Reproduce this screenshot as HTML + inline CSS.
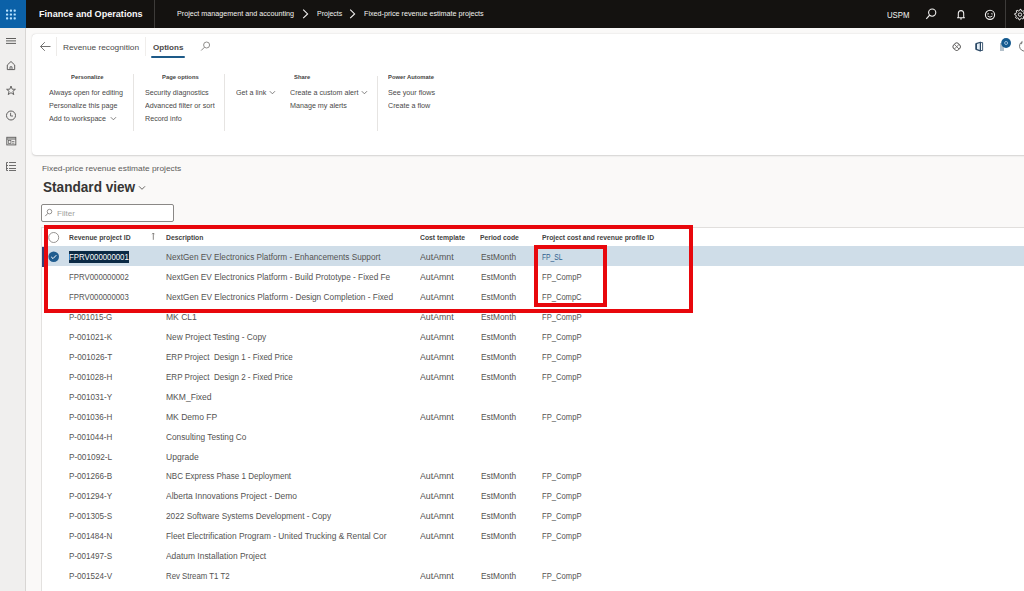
<!DOCTYPE html>
<html><head><meta charset="utf-8">
<style>
*{margin:0;padding:0;box-sizing:border-box}
html,body{width:1024px;height:591px;overflow:hidden;background:#faf9f8;font-family:"Liberation Sans",sans-serif;position:relative}
.a{position:absolute;white-space:pre;line-height:normal;transform-origin:0 0}
svg.a{overflow:visible}
</style></head><body>
<div class="a" style="left:0px;top:0px;width:1024px;height:28px;background:#141210;"></div>
<div class="a" style="left:0px;top:0px;width:26px;height:28px;background:#0b61a8;"></div>
<svg class="a" style="left:0px;top:0px" width="26" height="28" viewBox="0 0 26 28"><rect x="6.0" y="9.6" width="2.2" height="2.2" rx="0.7" fill="#b8e2ff"/><rect x="6.0" y="13.4" width="2.2" height="2.2" rx="0.7" fill="#b8e2ff"/><rect x="6.0" y="17.2" width="2.2" height="2.2" rx="0.7" fill="#b8e2ff"/><rect x="9.8" y="9.6" width="2.2" height="2.2" rx="0.7" fill="#b8e2ff"/><rect x="9.8" y="13.4" width="2.2" height="2.2" rx="0.7" fill="#b8e2ff"/><rect x="9.8" y="17.2" width="2.2" height="2.2" rx="0.7" fill="#b8e2ff"/><rect x="13.6" y="9.6" width="2.2" height="2.2" rx="0.7" fill="#b8e2ff"/><rect x="13.6" y="13.4" width="2.2" height="2.2" rx="0.7" fill="#b8e2ff"/><rect x="13.6" y="17.2" width="2.2" height="2.2" rx="0.7" fill="#b8e2ff"/></svg>
<div class="a" style="left:38.90px;top:8.31px;font-size:9.6px;font-weight:bold;color:#f8f8f8;transform:scaleX(0.9479);">Finance and Operations</div>
<div class="a" style="left:154px;top:0px;width:1px;height:28px;background:#3d3b39;"></div>
<div class="a" style="left:177.30px;top:9.45px;font-size:7.9px;font-weight:normal;color:#f3f2f1;transform:scaleX(0.9103);">Project management and accounting</div>
<svg class="a" style="left:302.3px;top:9px" width="7" height="10" viewBox="0 0 7 10"><path d="M1.2 0.7 L5.6 4.95 L1.2 9.2" stroke="#f3f2f1" stroke-width="1.1" fill="none"/></svg>
<div class="a" style="left:316.70px;top:9.45px;font-size:7.9px;font-weight:normal;color:#f3f2f1;transform:scaleX(0.8872);">Projects</div>
<svg class="a" style="left:349.3px;top:9px" width="7" height="10" viewBox="0 0 7 10"><path d="M1.2 0.7 L5.6 4.95 L1.2 9.2" stroke="#f3f2f1" stroke-width="1.1" fill="none"/></svg>
<div class="a" style="left:363.50px;top:9.45px;font-size:7.9px;font-weight:normal;color:#f3f2f1;transform:scaleX(0.9097);">Fixed-price revenue estimate projects</div>
<div class="a" style="left:886.50px;top:9.92px;font-size:8.6px;font-weight:normal;color:#f3f2f1;transform:scaleX(0.9057);">USPM</div>
<svg class="a" style="left:924px;top:8px" width="14" height="12" viewBox="0 0 14 12"><circle cx="8.2" cy="4.6" r="3.6" stroke="#f3f2f1" stroke-width="1.1" fill="none"/><path d="M5.6 7.2 L2.3 10.8" stroke="#f3f2f1" stroke-width="1.2"/></svg>
<svg class="a" style="left:955.5px;top:9px" width="10" height="11" viewBox="0 0 10 11"><path d="M2.3 8.2 V4.6 a2.7 3 0 0 1 5.4 0 V8.2 L8.5 8.8 H1.5 Z" stroke="#f3f2f1" stroke-width="1.05" fill="none" stroke-linejoin="round"/><path d="M4 9.9 h2" stroke="#f3f2f1" stroke-width="1"/></svg>
<svg class="a" style="left:984px;top:9px" width="12" height="12" viewBox="0 0 12 12"><circle cx="6" cy="5.8" r="4.6" stroke="#f3f2f1" stroke-width="1.1" fill="none"/><path d="M3.2 5.2 Q4.1 3.9 5 5.2 M7 5.2 Q7.9 3.9 8.8 5.2" stroke="#f3f2f1" stroke-width="0.9" fill="none"/><path d="M3.6 7 Q6 9.4 8.4 7" stroke="#f3f2f1" stroke-width="0.95" fill="none"/></svg>
<div class="a" style="left:1005px;top:0px;width:1px;height:28px;background:#3d3b39;"></div>
<svg class="a" style="left:1013px;top:8px" width="14" height="14" viewBox="0 0 14 14"><path d="M7.00 1.30 L8.03 1.40 L8.49 3.00 L9.17 3.36 L10.75 2.85 L11.41 3.66 L10.60 5.11 L10.83 5.84 L12.30 6.60 L12.20 7.63 L10.60 8.09 L10.24 8.77 L10.75 10.35 L9.94 11.01 L8.49 10.20 L7.76 10.43 L7.00 11.90 L5.97 11.80 L5.51 10.20 L4.83 9.84 L3.25 10.35 L2.59 9.54 L3.40 8.09 L3.17 7.36 L1.70 6.60 L1.80 5.57 L3.40 5.11 L3.76 4.43 L3.25 2.85 L4.06 2.19 L5.51 3.00 L6.24 2.77 Z" stroke="#f3f2f1" stroke-width="0.95" fill="none" stroke-linejoin="round"/><circle cx="7" cy="6.6" r="1.7" stroke="#f3f2f1" stroke-width="0.95" fill="none"/></svg>
<div class="a" style="left:0px;top:28px;width:25px;height:563px;background:#f0efee;"></div>
<div class="a" style="left:25px;top:28px;width:1px;height:563px;background:#d8d6d4;"></div>
<svg class="a" style="left:5px;top:36px" width="12" height="9" viewBox="0 0 12 9"><path d="M1 2.5 H11 M1 4.9 H11 M1 7.4 H11" stroke="#5f5e5d" stroke-width="1"/></svg>
<svg class="a" style="left:6px;top:60px" width="10" height="11" viewBox="0 0 10 11"><path d="M1.3 9.6 V5 L5 1.5 L8.7 5 V9.6 Z" stroke="#5f5e5d" stroke-width="1" fill="none" stroke-linejoin="round"/><path d="M4 9.6 V6.8 H6 V9.6" stroke="#5f5e5d" stroke-width="0.9" fill="none"/></svg>
<svg class="a" style="left:6px;top:85px" width="10" height="11" viewBox="0 0 10 11"><path d="M5 1 L6.2 4.2 L9.4 4.3 L6.9 6.3 L7.8 9.6 L5 7.7 L2.2 9.6 L3.1 6.3 L0.6 4.3 L3.8 4.2 Z" stroke="#5f5e5d" stroke-width="0.95" fill="none" stroke-linejoin="round"/></svg>
<svg class="a" style="left:5px;top:110px" width="12" height="11" viewBox="0 0 12 11"><circle cx="6" cy="5.5" r="4.5" stroke="#5f5e5d" stroke-width="1" fill="none"/><path d="M5.6 2.8 V6 H8" stroke="#5f5e5d" stroke-width="0.9" fill="none"/></svg>
<svg class="a" style="left:6px;top:136px" width="11" height="10" viewBox="0 0 11 10"><rect x="0.8" y="1.3" width="9" height="7.6" stroke="#5f5e5d" stroke-width="0.95" fill="none"/><path d="M0.8 3 H9.8" stroke="#5f5e5d" stroke-width="1"/><rect x="2.3" y="4.4" width="2.6" height="3" stroke="#5f5e5d" stroke-width="0.7" fill="none"/><path d="M5.8 5.5 H8.4 M5.8 7.2 H8.4" stroke="#5f5e5d" stroke-width="0.7"/></svg>
<svg class="a" style="left:5px;top:161px" width="12" height="10" viewBox="0 0 12 10"><path d="M4 1.5 H11 M4 4.5 H11 M4 7.5 H11 M4 9.5 H11" stroke="#5f5e5d" stroke-width="0.9"/><path d="M1.5 1.5 V9.5" stroke="#5f5e5d" stroke-width="0.9"/><path d="M1.5 1.5 H3 M1.5 4.5 H3 M1.5 7.5 H3 M1.5 9.5 H3" stroke="#5f5e5d" stroke-width="0.9"/></svg>
<div class="a" style="left:32px;top:34px;width:1010px;height:121px;background:#fff;border-radius:4px;box-shadow:0 0.6px 1.8px rgba(0,0,0,0.16),0 0 0.5px rgba(0,0,0,0.1)"></div>
<svg class="a" style="left:39px;top:41px" width="13" height="11" viewBox="0 0 13 11"><path d="M11.5 5.5 H1.5 M5.8 1.2 L1.5 5.5 L5.8 9.8" stroke="#6b6a69" stroke-width="0.95" fill="none"/></svg>
<div class="a" style="left:56px;top:37px;width:1px;height:19px;background:#edebe9;"></div>
<div class="a" style="left:63.40px;top:42.67px;font-size:8.1px;font-weight:normal;color:#4b4a49;transform:scaleX(1.0236);">Revenue recognition</div>
<div class="a" style="left:145px;top:37px;width:1px;height:19px;background:#f0eeec;"></div>
<div class="a" style="left:152.70px;top:42.67px;font-size:8.1px;font-weight:bold;color:#4a4948;transform:scaleX(0.9942);">Options</div>
<div class="a" style="left:151px;top:56px;width:34px;height:2px;background:#1d5a88;border-radius:1px"></div>
<svg class="a" style="left:200px;top:41px" width="11" height="11" viewBox="0 0 11 11"><circle cx="6.6" cy="4" r="3" stroke="#8a8886" stroke-width="0.95" fill="none"/><path d="M4.5 6.2 L1.2 9.5" stroke="#8a8886" stroke-width="1"/></svg>
<svg class="a" style="left:950px;top:40px" width="12" height="12" viewBox="0 0 12 12"><rect x="3.4" y="3.4" width="6.6" height="6.6" rx="2.3" transform="rotate(45 6.7 6.7)" stroke="#6b6a69" stroke-width="0.95" fill="none"/><path d="M4.4 4.4 L9 9 M9 4.4 L4.4 9" stroke="#6b6a69" stroke-width="0.9"/></svg>
<svg class="a" style="left:974px;top:41px" width="11" height="11" viewBox="0 0 11 11"><path d="M2.2 2.6 L6.4 1.2 V9.9 L2.2 8.4 Z" stroke="#2d4a66" stroke-width="1.2" fill="#e3edf5" stroke-linejoin="round"/><path d="M6.4 1.6 H8.6 V9.5 H6.4" stroke="#2d4a66" stroke-width="0.9" fill="none"/><path d="M2.2 2.6 V8.4" stroke="#2d4a66" stroke-width="1.6"/></svg>
<div class="a" style="left:1000px;top:43px;width:4px;height:8px;background:#b3c0ca;"></div>
<svg class="a" style="left:1000px;top:37px" width="12" height="12" viewBox="0 0 12 12"><circle cx="6.1" cy="6" r="4.9" fill="#155a8f"/><circle cx="6.1" cy="6" r="1.5" stroke="#bcd6ec" stroke-width="0.8" fill="none"/></svg>
<svg class="a" style="left:1016px;top:39px" width="12" height="14" viewBox="0 0 12 14"><path d="M6.2 2.6 A4.9 4.9 0 1 0 11 11.5" stroke="#6b6a69" stroke-width="0.95" fill="none"/><path d="M6.2 2.6 L5.4 5.2" stroke="#6b6a69" stroke-width="0.9"/></svg>
<div class="a" style="left:71.00px;top:73.84px;font-size:5.7px;font-weight:bold;color:#454443;transform:scaleX(1.0278);">Personalize</div>
<div class="a" style="left:49.20px;top:88.29px;font-size:7.3px;font-weight:normal;color:#4a4948;transform:scaleX(0.9814);">Always open for editing</div>
<div class="a" style="left:49.20px;top:101.34px;font-size:7.3px;font-weight:normal;color:#4a4948;transform:scaleX(0.9814);">Personalize this page</div>
<div class="a" style="left:49.20px;top:114.39px;font-size:7.3px;font-weight:normal;color:#4a4948;transform:scaleX(0.9814);">Add to workspace</div>
<svg class="a" style="left:110.3px;top:115.5px" width="7" height="5" viewBox="0 0 7 5"><path d="M0.8 1.2 L3.4 3.8 L6 1.2" stroke="#6b6a69" stroke-width="0.85" fill="none"/></svg>
<div class="a" style="left:133px;top:74px;width:1px;height:57px;background:#e6e4e2;"></div>
<div class="a" style="left:162.00px;top:73.84px;font-size:5.7px;font-weight:bold;color:#454443;transform:scaleX(1.0278);">Page options</div>
<div class="a" style="left:144.80px;top:88.29px;font-size:7.3px;font-weight:normal;color:#4a4948;transform:scaleX(0.9814);">Security diagnostics</div>
<div class="a" style="left:144.80px;top:101.34px;font-size:7.3px;font-weight:normal;color:#4a4948;transform:scaleX(0.9814);">Advanced filter or sort</div>
<div class="a" style="left:144.80px;top:114.39px;font-size:7.3px;font-weight:normal;color:#4a4948;transform:scaleX(0.9814);">Record info</div>
<div class="a" style="left:224px;top:74px;width:1px;height:57px;background:#e6e4e2;"></div>
<div class="a" style="left:235.90px;top:88.29px;font-size:7.3px;font-weight:normal;color:#4a4948;transform:scaleX(0.9814);">Get a link</div>
<svg class="a" style="left:268.5px;top:90px" width="7" height="5" viewBox="0 0 7 5"><path d="M0.8 1.2 L3.4 3.8 L6 1.2" stroke="#6b6a69" stroke-width="0.85" fill="none"/></svg>
<div class="a" style="left:294.10px;top:73.84px;font-size:5.7px;font-weight:bold;color:#454443;transform:scaleX(1.0278);">Share</div>
<div class="a" style="left:290.00px;top:88.29px;font-size:7.3px;font-weight:normal;color:#4a4948;transform:scaleX(0.9814);">Create a custom alert</div>
<svg class="a" style="left:361px;top:90px" width="7" height="5" viewBox="0 0 7 5"><path d="M0.8 1.2 L3.4 3.8 L6 1.2" stroke="#6b6a69" stroke-width="0.85" fill="none"/></svg>
<div class="a" style="left:290.00px;top:101.34px;font-size:7.3px;font-weight:normal;color:#4a4948;transform:scaleX(0.9814);">Manage my alerts</div>
<div class="a" style="left:377px;top:76px;width:1px;height:55px;background:#e6e4e2;"></div>
<div class="a" style="left:387.70px;top:73.84px;font-size:5.7px;font-weight:bold;color:#454443;transform:scaleX(1.0278);">Power Automate</div>
<div class="a" style="left:387.70px;top:88.29px;font-size:7.3px;font-weight:normal;color:#4a4948;transform:scaleX(0.9814);">See your flows</div>
<div class="a" style="left:387.70px;top:101.34px;font-size:7.3px;font-weight:normal;color:#4a4948;transform:scaleX(0.9814);">Create a flow</div>
<div class="a" style="left:41.80px;top:163.56px;font-size:8.0px;font-weight:normal;color:#5c5b5a;transform:scaleX(1.0436);">Fixed-price revenue estimate projects</div>
<div class="a" style="left:42.80px;top:179.04px;font-size:14.1px;font-weight:bold;color:#363534;transform:scaleX(0.9648);">Standard view</div>
<svg class="a" style="left:138px;top:185px" width="8" height="6" viewBox="0 0 8 6"><path d="M1 1.3 L4 4.3 L7 1.3" stroke="#605e5c" stroke-width="0.95" fill="none"/></svg>
<div class="a" style="left:41px;top:204px;width:133px;height:18px;background:#fff;border:1px solid #8a8886;border-radius:2px"></div>
<svg class="a" style="left:44px;top:208px" width="10" height="10" viewBox="0 0 10 10"><circle cx="5.5" cy="3.6" r="2.3" stroke="#8a8886" stroke-width="0.9" fill="none"/><path d="M3.9 5.3 L1.3 8.1" stroke="#8a8886" stroke-width="1"/></svg>
<div class="a" style="left:56.90px;top:209.26px;font-size:8.0px;font-weight:normal;color:#a19f9d;transform:scaleX(1.0067);">Filter</div>
<div class="a" style="left:41px;top:227px;width:983px;height:364px;background:#ffffff;"></div>
<div class="a" style="left:41px;top:227px;width:983px;height:1px;background:#e1dfdd;"></div>
<div class="a" style="left:41px;top:227px;width:1px;height:364px;background:#e3e1df;"></div>
<svg class="a" style="left:47px;top:231px" width="14" height="14" viewBox="0 0 14 14"><circle cx="6.7" cy="6.5" r="5" stroke="#8a8886" stroke-width="0.9" fill="#fff"/></svg>
<div class="a" style="left:68.80px;top:233.76px;font-size:6.9px;font-weight:bold;color:#434241;transform:scaleX(0.9861);">Revenue project ID</div>
<svg class="a" style="left:150px;top:232px" width="7" height="9" viewBox="0 0 7 9"><path d="M3.3 7.8 V1 M2.2 2.2 L3.3 1 L4.4 2.2" stroke="#7a7876" stroke-width="0.9" fill="none"/></svg>
<div class="a" style="left:166.00px;top:233.76px;font-size:6.9px;font-weight:bold;color:#434241;transform:scaleX(0.9861);">Description</div>
<div class="a" style="left:419.70px;top:233.76px;font-size:6.9px;font-weight:bold;color:#434241;transform:scaleX(0.9861);">Cost template</div>
<div class="a" style="left:480.30px;top:233.76px;font-size:6.9px;font-weight:bold;color:#434241;transform:scaleX(0.9861);">Period code</div>
<div class="a" style="left:541.80px;top:233.76px;font-size:6.9px;font-weight:bold;color:#434241;transform:scaleX(0.9861);">Project cost and revenue profile ID</div>
<div class="a" style="left:42px;top:246px;width:982px;height:20px;background:#cfdde8;"></div>
<div class="a" style="left:41.5px;top:247px;width:2.6px;height:19.5px;background:#33427a;"></div>
<div class="a" style="left:69px;top:251px;width:60px;height:12px;background:#0b2a45;"></div>
<svg class="a" style="left:47px;top:250px" width="14" height="14" viewBox="0 0 14 14"><circle cx="6.7" cy="6.8" r="5.3" fill="#1f5c8f"/><path d="M4.2 6.9 L6 8.6 L9.3 5.2" stroke="#fff" stroke-width="1" fill="none"/></svg>
<div class="a" style="left:69.10px;top:252.41px;font-size:8.5px;font-weight:normal;color:#ffffff;transform:scaleX(0.9191);">FPRV000000001</div>
<div class="a" style="left:166.40px;top:252.41px;font-size:8.5px;font-weight:normal;color:#545352;transform:scaleX(0.9681);">NextGen EV Electronics Platform - Enhancements Support</div>
<div class="a" style="left:419.70px;top:252.41px;font-size:8.5px;font-weight:normal;color:#545352;transform:scaleX(1.0334);">AutAmnt</div>
<div class="a" style="left:480.90px;top:252.41px;font-size:8.5px;font-weight:normal;color:#545352;transform:scaleX(0.9775);">EstMonth</div>
<div class="a" style="left:541.80px;top:252.41px;font-size:8.5px;font-weight:normal;color:#2f5f8d;transform:scaleX(0.7923);">FP_SL</div>
<div class="a" style="left:69.10px;top:272.32px;font-size:8.5px;font-weight:normal;color:#545352;transform:scaleX(0.9191);">FPRV000000002</div>
<div class="a" style="left:166.40px;top:272.32px;font-size:8.5px;font-weight:normal;color:#545352;transform:scaleX(0.9705);">NextGen EV Electronics Platform - Build Prototype - Fixed Fe</div>
<div class="a" style="left:419.70px;top:272.32px;font-size:8.5px;font-weight:normal;color:#545352;transform:scaleX(1.0334);">AutAmnt</div>
<div class="a" style="left:480.90px;top:272.32px;font-size:8.5px;font-weight:normal;color:#545352;transform:scaleX(0.9775);">EstMonth</div>
<div class="a" style="left:541.80px;top:272.32px;font-size:8.5px;font-weight:normal;color:#545352;transform:scaleX(0.9013);">FP_CompP</div>
<div class="a" style="left:69.10px;top:292.23px;font-size:8.5px;font-weight:normal;color:#545352;transform:scaleX(0.9191);">FPRV000000003</div>
<div class="a" style="left:166.40px;top:292.23px;font-size:8.5px;font-weight:normal;color:#545352;transform:scaleX(0.9751);">NextGen EV Electronics Platform - Design Completion - Fixed</div>
<div class="a" style="left:419.70px;top:292.23px;font-size:8.5px;font-weight:normal;color:#545352;transform:scaleX(1.0334);">AutAmnt</div>
<div class="a" style="left:480.90px;top:292.23px;font-size:8.5px;font-weight:normal;color:#545352;transform:scaleX(0.9775);">EstMonth</div>
<div class="a" style="left:541.80px;top:292.23px;font-size:8.5px;font-weight:normal;color:#545352;transform:scaleX(0.8918);">FP_CompC</div>
<div class="a" style="left:69.10px;top:312.14px;font-size:8.5px;font-weight:normal;color:#545352;transform:scaleX(0.9328);">P-001015-G</div>
<div class="a" style="left:166.40px;top:312.14px;font-size:8.5px;font-weight:normal;color:#545352;transform:scaleX(1.0055);">MK CL1</div>
<div class="a" style="left:419.70px;top:312.14px;font-size:8.5px;font-weight:normal;color:#545352;transform:scaleX(1.0334);">AutAmnt</div>
<div class="a" style="left:480.90px;top:312.14px;font-size:8.5px;font-weight:normal;color:#545352;transform:scaleX(0.9775);">EstMonth</div>
<div class="a" style="left:541.80px;top:312.14px;font-size:8.5px;font-weight:normal;color:#545352;transform:scaleX(0.9013);">FP_CompP</div>
<div class="a" style="left:69.10px;top:332.05px;font-size:8.5px;font-weight:normal;color:#545352;transform:scaleX(0.9521);">P-001021-K</div>
<div class="a" style="left:166.40px;top:332.05px;font-size:8.5px;font-weight:normal;color:#545352;transform:scaleX(0.9789);">New Project Testing - Copy</div>
<div class="a" style="left:419.70px;top:332.05px;font-size:8.5px;font-weight:normal;color:#545352;transform:scaleX(1.0334);">AutAmnt</div>
<div class="a" style="left:480.90px;top:332.05px;font-size:8.5px;font-weight:normal;color:#545352;transform:scaleX(0.9775);">EstMonth</div>
<div class="a" style="left:541.80px;top:332.05px;font-size:8.5px;font-weight:normal;color:#545352;transform:scaleX(0.9013);">FP_CompP</div>
<div class="a" style="left:69.10px;top:351.96px;font-size:8.5px;font-weight:normal;color:#545352;transform:scaleX(0.9623);">P-001026-T</div>
<div class="a" style="left:166.40px;top:351.96px;font-size:8.5px;font-weight:normal;color:#545352;transform:scaleX(0.9429);">ERP Project&nbsp; Design 1 - Fixed Price</div>
<div class="a" style="left:419.70px;top:351.96px;font-size:8.5px;font-weight:normal;color:#545352;transform:scaleX(1.0334);">AutAmnt</div>
<div class="a" style="left:480.90px;top:351.96px;font-size:8.5px;font-weight:normal;color:#545352;transform:scaleX(0.9775);">EstMonth</div>
<div class="a" style="left:541.80px;top:351.96px;font-size:8.5px;font-weight:normal;color:#545352;transform:scaleX(0.9013);">FP_CompP</div>
<div class="a" style="left:69.10px;top:371.87px;font-size:8.5px;font-weight:normal;color:#545352;transform:scaleX(0.9423);">P-001028-H</div>
<div class="a" style="left:166.40px;top:371.87px;font-size:8.5px;font-weight:normal;color:#545352;transform:scaleX(0.9429);">ERP Project&nbsp; Design 2 - Fixed Price</div>
<div class="a" style="left:419.70px;top:371.87px;font-size:8.5px;font-weight:normal;color:#545352;transform:scaleX(1.0334);">AutAmnt</div>
<div class="a" style="left:480.90px;top:371.87px;font-size:8.5px;font-weight:normal;color:#545352;transform:scaleX(0.9775);">EstMonth</div>
<div class="a" style="left:541.80px;top:371.87px;font-size:8.5px;font-weight:normal;color:#545352;transform:scaleX(0.9013);">FP_CompP</div>
<div class="a" style="left:69.10px;top:391.78px;font-size:8.5px;font-weight:normal;color:#545352;transform:scaleX(0.9521);">P-001031-Y</div>
<div class="a" style="left:166.40px;top:391.78px;font-size:8.5px;font-weight:normal;color:#545352;transform:scaleX(1.0055);">MKM_Fixed</div>
<div class="a" style="left:69.10px;top:411.69px;font-size:8.5px;font-weight:normal;color:#545352;transform:scaleX(0.9423);">P-001036-H</div>
<div class="a" style="left:166.40px;top:411.69px;font-size:8.5px;font-weight:normal;color:#545352;transform:scaleX(1.0055);">MK Demo FP</div>
<div class="a" style="left:419.70px;top:411.69px;font-size:8.5px;font-weight:normal;color:#545352;transform:scaleX(1.0334);">AutAmnt</div>
<div class="a" style="left:480.90px;top:411.69px;font-size:8.5px;font-weight:normal;color:#545352;transform:scaleX(0.9775);">EstMonth</div>
<div class="a" style="left:541.80px;top:411.69px;font-size:8.5px;font-weight:normal;color:#545352;transform:scaleX(0.9013);">FP_CompP</div>
<div class="a" style="left:69.10px;top:431.60px;font-size:8.5px;font-weight:normal;color:#545352;transform:scaleX(0.9423);">P-001044-H</div>
<div class="a" style="left:166.40px;top:431.60px;font-size:8.5px;font-weight:normal;color:#545352;transform:scaleX(0.9742);">Consulting Testing Co</div>
<div class="a" style="left:69.10px;top:451.51px;font-size:8.5px;font-weight:normal;color:#545352;transform:scaleX(0.9725);">P-001092-L</div>
<div class="a" style="left:166.40px;top:451.51px;font-size:8.5px;font-weight:normal;color:#545352;transform:scaleX(1.0055);">Upgrade</div>
<div class="a" style="left:69.10px;top:471.42px;font-size:8.5px;font-weight:normal;color:#545352;transform:scaleX(0.9521);">P-001266-B</div>
<div class="a" style="left:166.40px;top:471.42px;font-size:8.5px;font-weight:normal;color:#545352;transform:scaleX(0.9457);">NBC Express Phase 1 Deployment</div>
<div class="a" style="left:419.70px;top:471.42px;font-size:8.5px;font-weight:normal;color:#545352;transform:scaleX(1.0334);">AutAmnt</div>
<div class="a" style="left:480.90px;top:471.42px;font-size:8.5px;font-weight:normal;color:#545352;transform:scaleX(0.9775);">EstMonth</div>
<div class="a" style="left:541.80px;top:471.42px;font-size:8.5px;font-weight:normal;color:#545352;transform:scaleX(0.9013);">FP_CompP</div>
<div class="a" style="left:69.10px;top:491.33px;font-size:8.5px;font-weight:normal;color:#545352;transform:scaleX(0.9521);">P-001294-Y</div>
<div class="a" style="left:166.40px;top:491.33px;font-size:8.5px;font-weight:normal;color:#545352;transform:scaleX(0.9931);">Alberta Innovations Project - Demo</div>
<div class="a" style="left:419.70px;top:491.33px;font-size:8.5px;font-weight:normal;color:#545352;transform:scaleX(1.0334);">AutAmnt</div>
<div class="a" style="left:480.90px;top:491.33px;font-size:8.5px;font-weight:normal;color:#545352;transform:scaleX(0.9775);">EstMonth</div>
<div class="a" style="left:541.80px;top:491.33px;font-size:8.5px;font-weight:normal;color:#545352;transform:scaleX(0.9013);">FP_CompP</div>
<div class="a" style="left:69.10px;top:511.24px;font-size:8.5px;font-weight:normal;color:#545352;transform:scaleX(0.9521);">P-001305-S</div>
<div class="a" style="left:166.40px;top:511.24px;font-size:8.5px;font-weight:normal;color:#545352;transform:scaleX(0.9734);">2022 Software Systems Development - Copy</div>
<div class="a" style="left:419.70px;top:511.24px;font-size:8.5px;font-weight:normal;color:#545352;transform:scaleX(1.0334);">AutAmnt</div>
<div class="a" style="left:480.90px;top:511.24px;font-size:8.5px;font-weight:normal;color:#545352;transform:scaleX(0.9775);">EstMonth</div>
<div class="a" style="left:541.80px;top:511.24px;font-size:8.5px;font-weight:normal;color:#545352;transform:scaleX(0.9013);">FP_CompP</div>
<div class="a" style="left:69.10px;top:531.15px;font-size:8.5px;font-weight:normal;color:#545352;transform:scaleX(0.9423);">P-001484-N</div>
<div class="a" style="left:166.40px;top:531.15px;font-size:8.5px;font-weight:normal;color:#545352;transform:scaleX(0.9826);">Fleet Electrification Program - United Trucking &amp; Rental Cor</div>
<div class="a" style="left:419.70px;top:531.15px;font-size:8.5px;font-weight:normal;color:#545352;transform:scaleX(1.0334);">AutAmnt</div>
<div class="a" style="left:480.90px;top:531.15px;font-size:8.5px;font-weight:normal;color:#545352;transform:scaleX(0.9775);">EstMonth</div>
<div class="a" style="left:541.80px;top:531.15px;font-size:8.5px;font-weight:normal;color:#545352;transform:scaleX(0.9013);">FP_CompP</div>
<div class="a" style="left:69.10px;top:551.06px;font-size:8.5px;font-weight:normal;color:#545352;transform:scaleX(0.9521);">P-001497-S</div>
<div class="a" style="left:166.40px;top:551.06px;font-size:8.5px;font-weight:normal;color:#545352;transform:scaleX(0.9910);">Adatum Installation Project</div>
<div class="a" style="left:69.10px;top:570.97px;font-size:8.5px;font-weight:normal;color:#545352;transform:scaleX(0.9521);">P-001524-V</div>
<div class="a" style="left:166.40px;top:570.97px;font-size:8.5px;font-weight:normal;color:#545352;transform:scaleX(0.9199);">Rev Stream T1 T2</div>
<div class="a" style="left:419.70px;top:570.97px;font-size:8.5px;font-weight:normal;color:#545352;transform:scaleX(1.0334);">AutAmnt</div>
<div class="a" style="left:480.90px;top:570.97px;font-size:8.5px;font-weight:normal;color:#545352;transform:scaleX(0.9775);">EstMonth</div>
<div class="a" style="left:541.80px;top:570.97px;font-size:8.5px;font-weight:normal;color:#545352;transform:scaleX(0.9013);">FP_CompP</div>
<div class="a" style="left:43.5px;top:225.1px;width:649.5px;height:88.4px;border:4.2px solid #e8070c"></div>
<div class="a" style="left:533.6px;top:245px;width:73.2px;height:61.7px;border:4.5px solid #e8070c"></div>
</body></html>
